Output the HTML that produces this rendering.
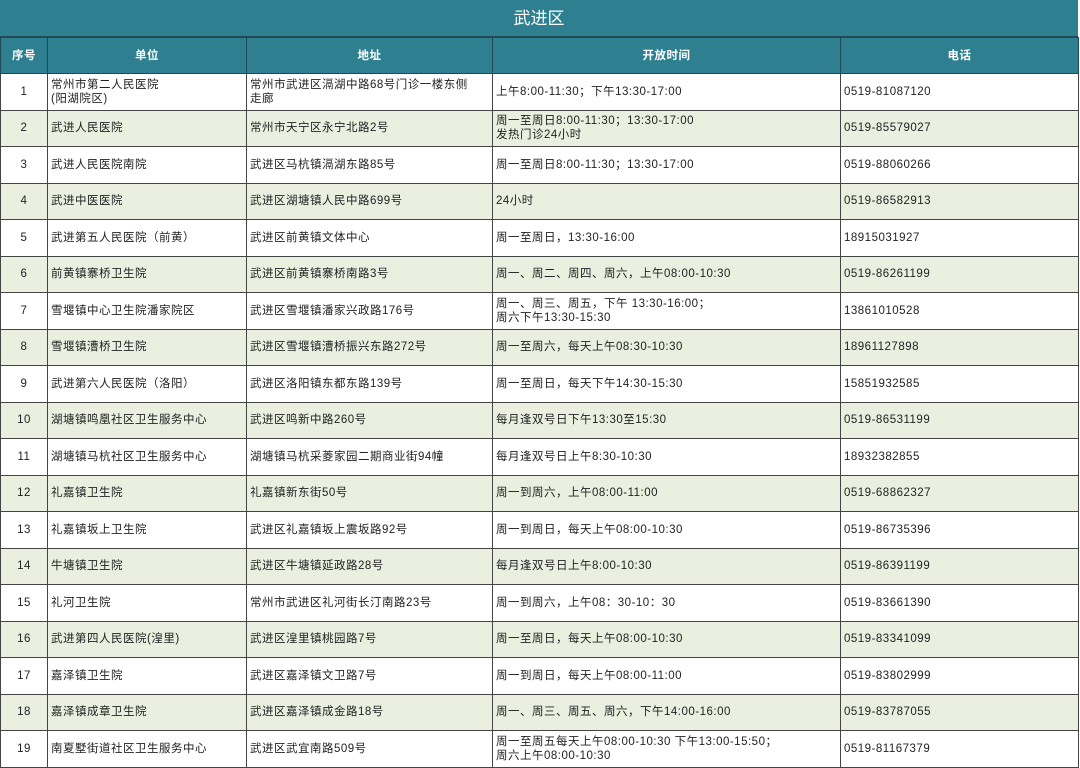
<!DOCTYPE html>
<html><head><meta charset="utf-8"><style>
body{margin:0;width:1080px;height:768px;background:#fff;overflow:hidden;font-family:"Liberation Sans","Noto Sans CJK SC",sans-serif;}
.t{position:absolute;left:0;top:0;width:1078px;height:37px;background:#2e7f8f;color:#fff;font-size:17px;text-align:center;line-height:37px;border-bottom:1px solid #1f4a55;box-sizing:border-box;}
table{position:absolute;left:0;top:37px;border-collapse:collapse;table-layout:fixed;width:1078px;}
td{border:1px solid #444;font-size:11.5px;color:#222;height:36.5px;padding:0 0 0 3px;line-height:14px;box-sizing:border-box;letter-spacing:0.5px;}
td:first-child{text-align:center;padding:0;}
tr.h td{background:#2e7f8f;color:#fff;text-align:center;font-weight:bold;height:36px;padding:0;border-color:#1f4a55;}
tr:nth-child(odd):not(.h) td{background:#eaefe0;}
</style></head><body>
<div class="t">武进区</div>
<table>
<colgroup><col style="width:47px"><col style="width:199px"><col style="width:246px"><col style="width:348px"><col style="width:238px"></colgroup>
<tr class="h"><td>序号</td><td>单位</td><td>地址</td><td>开放时间</td><td>电话</td></tr>
<tr><td>1</td><td>常州市第二人民医院<br>(阳湖院区)</td><td>常州市武进区滆湖中路68号门诊一楼东侧<br>走廊</td><td>上午8:00-11:30；下午13:30-17:00</td><td>0519-81087120</td></tr>
<tr><td>2</td><td>武进人民医院</td><td>常州市天宁区永宁北路2号</td><td>周一至周日8:00-11:30；13:30-17:00<br>发热门诊24小时</td><td>0519-85579027</td></tr>
<tr><td>3</td><td>武进人民医院南院</td><td>武进区马杭镇滆湖东路85号</td><td>周一至周日8:00-11:30；13:30-17:00</td><td>0519-88060266</td></tr>
<tr><td>4</td><td>武进中医医院</td><td>武进区湖塘镇人民中路699号</td><td>24小时</td><td>0519-86582913</td></tr>
<tr><td>5</td><td>武进第五人民医院（前黄）</td><td>武进区前黄镇文体中心</td><td>周一至周日，13:30-16:00</td><td>18915031927</td></tr>
<tr><td>6</td><td>前黄镇寨桥卫生院</td><td>武进区前黄镇寨桥南路3号</td><td>周一、周二、周四、周六，上午08:00-10:30</td><td>0519-86261199</td></tr>
<tr><td>7</td><td>雪堰镇中心卫生院潘家院区</td><td>武进区雪堰镇潘家兴政路176号</td><td>周一、周三、周五，下午 13:30-16:00；<br>周六下午13:30-15:30</td><td>13861010528</td></tr>
<tr><td>8</td><td>雪堰镇漕桥卫生院</td><td>武进区雪堰镇漕桥振兴东路272号</td><td>周一至周六，每天上午08:30-10:30</td><td>18961127898</td></tr>
<tr><td>9</td><td>武进第六人民医院（洛阳）</td><td>武进区洛阳镇东都东路139号</td><td>周一至周日，每天下午14:30-15:30</td><td>15851932585</td></tr>
<tr><td>10</td><td>湖塘镇鸣凰社区卫生服务中心</td><td>武进区鸣新中路260号</td><td>每月逢双号日下午13:30至15:30</td><td>0519-86531199</td></tr>
<tr><td>11</td><td>湖塘镇马杭社区卫生服务中心</td><td>湖塘镇马杭采菱家园二期商业街94幢</td><td>每月逢双号日上午8:30-10:30</td><td>18932382855</td></tr>
<tr><td>12</td><td>礼嘉镇卫生院</td><td>礼嘉镇新东街50号</td><td>周一到周六，上午08:00-11:00</td><td>0519-68862327</td></tr>
<tr><td>13</td><td>礼嘉镇坂上卫生院</td><td>武进区礼嘉镇坂上震坂路92号</td><td>周一到周日，每天上午08:00-10:30</td><td>0519-86735396</td></tr>
<tr><td>14</td><td>牛塘镇卫生院</td><td>武进区牛塘镇延政路28号</td><td>每月逢双号日上午8:00-10:30</td><td>0519-86391199</td></tr>
<tr><td>15</td><td>礼河卫生院</td><td>常州市武进区礼河街长汀南路23号</td><td>周一到周六，上午08：30-10：30</td><td>0519-83661390</td></tr>
<tr><td>16</td><td>武进第四人民医院(湟里)</td><td>武进区湟里镇桃园路7号</td><td>周一至周日，每天上午08:00-10:30</td><td>0519-83341099</td></tr>
<tr><td>17</td><td>嘉泽镇卫生院</td><td>武进区嘉泽镇文卫路7号</td><td>周一到周日，每天上午08:00-11:00</td><td>0519-83802999</td></tr>
<tr><td>18</td><td>嘉泽镇成章卫生院</td><td>武进区嘉泽镇成金路18号</td><td>周一、周三、周五、周六，下午14:00-16:00</td><td>0519-83787055</td></tr>
<tr><td>19</td><td>南夏墅街道社区卫生服务中心</td><td>武进区武宜南路509号</td><td>周一至周五每天上午08:00-10:30 下午13:00-15:50；<br>周六上午08:00-10:30</td><td>0519-81167379</td></tr>
</table>
</body></html>
